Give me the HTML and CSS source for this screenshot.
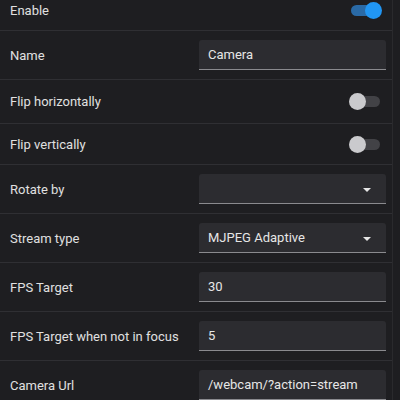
FILE: index.html
```html
<!DOCTYPE html>
<html>
<head>
<meta charset="utf-8">
<link rel="stylesheet" href="styles.css">
</head>
<body>
<div class="panel">
  <div class="list">
    <div class="row row-first">
      <div class="label">Enable</div>
      <div class="ctrl-end"><span class="switch on"><span class="track"></span><span class="thumb"></span></span></div>
    </div>
    <div class="row">
      <div class="label">Name</div>
      <div class="field"><span class="value">Camera</span></div>
    </div>
    <div class="row row-toggle">
      <div class="label">Flip horizontally</div>
      <div class="ctrl-end"><span class="switch"><span class="track"></span><span class="thumb"></span></span></div>
    </div>
    <div class="row row-toggle2">
      <div class="label">Flip vertically</div>
      <div class="ctrl-end"><span class="switch"><span class="track"></span><span class="thumb"></span></span></div>
    </div>
    <div class="row">
      <div class="label">Rotate by</div>
      <div class="field select"><span class="value"></span><span class="arrow"></span></div>
    </div>
    <div class="row">
      <div class="label">Stream type</div>
      <div class="field select"><span class="value">MJPEG Adaptive</span><span class="arrow"></span></div>
    </div>
    <div class="row">
      <div class="label">FPS Target</div>
      <div class="field"><span class="value">30</span></div>
    </div>
    <div class="row">
      <div class="label">FPS Target when not in focus</div>
      <div class="field"><span class="value">5</span></div>
    </div>
    <div class="row">
      <div class="label">Camera Url</div>
      <div class="field"><span class="value">/webcam/?action=stream</span></div>
    </div>
  </div>
</div>
</body>
</html>
```
FILE: styles.css
```css
html, body {
  margin: 0;
  padding: 0;
  background: #1e1e21;
  overflow: hidden;
}
body {
  font-family: Roboto, "Noto Sans", sans-serif;
  font-size: 13px;
  color: #dcdcdc;
}
.panel {
  height: 400px;
  overflow: hidden;
  border-right: 1px solid #2a2a2d;
  box-sizing: border-box;
  width: 393px;
}
.list {
  margin-top: -9px;
}
.row {
  display: grid;
  grid-template-columns: 1fr 187px;
  align-items: center;
  height: 48px;
  padding: 0 6px 0 10px;
  border-bottom: 1px solid #2f2f33;
}
.row-first {
  height: 39px;
}
.row-toggle {
  height: 43px;
}
.row-toggle2 {
  height: 40px;
}
.label {
  color: #e0e0e0;
  white-space: nowrap;
}
.ctrl-end {
  display: flex;
  justify-content: flex-end;
  padding-right: 4px;
}
.switch {
  position: relative;
  display: block;
  width: 33px;
  height: 17px;
}
.track {
  position: absolute;
  left: 2px;
  right: 2px;
  top: 3px;
  height: 11px;
  border-radius: 6px;
  background: #424246;
}
.thumb {
  position: absolute;
  top: 0;
  left: 0;
  width: 17px;
  height: 17px;
  border-radius: 50%;
  background: #cacacd;
}
.switch.on .track {
  background: #2a6aa6;
}
.switch.on .thumb {
  left: auto;
  right: 0;
  background: #2196f3;
}
.field {
  display: flex;
  align-items: center;
  height: 29px;
  background: #2c2c30;
  border-bottom: 1px solid #8a8a8e;
  border-radius: 3px 3px 0 0;
  padding: 0 15px 0 9px;
  color: #e6e6e6;
}
.value {
  flex: 1;
  white-space: nowrap;
}
.arrow {
  width: 0;
  height: 0;
  border-left: 4px solid transparent;
  border-right: 4px solid transparent;
  border-top: 4px solid #e6e6e6;
  margin-top: 3px;
}
```
